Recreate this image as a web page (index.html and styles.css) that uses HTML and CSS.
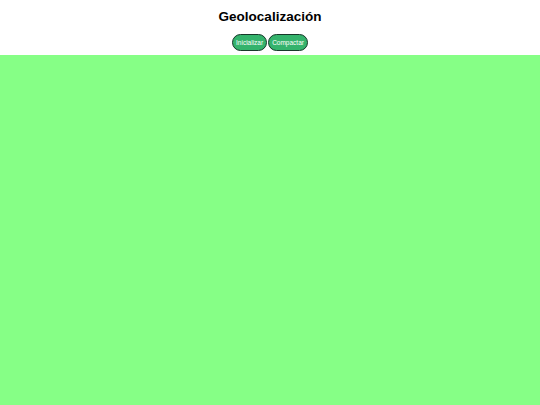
FILE: index.html
```html
<!DOCTYPE html>
<html lang="es">
<head>
  <meta charset="UTF-8">
  <title>Geolocalización</title>
  <link rel="stylesheet" href="styles.css">
</head>
<body>
  <header>
    <h1>Geolocalización</h1>
    <div class="controles">
      <button class="boton">Inicializar</button><button class="boton">Compactar</button>
    </div>
  </header>

  <main id="mapa"></main>
</body>
</html>
```

FILE: styles.css
```css
/* Estilos de la página */
body {
  font-family: "Liberation Sans", Arial, sans-serif;
  display: flex;
  flex-direction: column;
  height: 100vh;
  margin: 0;
}

header {
  text-align: center;
  padding: 8px 0 4px;
}

h1 {
  font-size: 13.5px;
  margin: 0 0 9px;
  line-height: 17px;
}

.controles {
  display: flex;
  justify-content: center;
  gap: 1px;
}

.boton {
  font-family: "Liberation Sans", Arial, sans-serif;
  font-size: 6.5px;
  color: white;
  background-color: #34b36c;
  border: 1px solid #17382a;
  border-radius: 9px;
  height: 17px;
  padding: 0 3px;
}

#mapa {
  background-color: #86ff86;
  flex-grow: 1;
}
```
